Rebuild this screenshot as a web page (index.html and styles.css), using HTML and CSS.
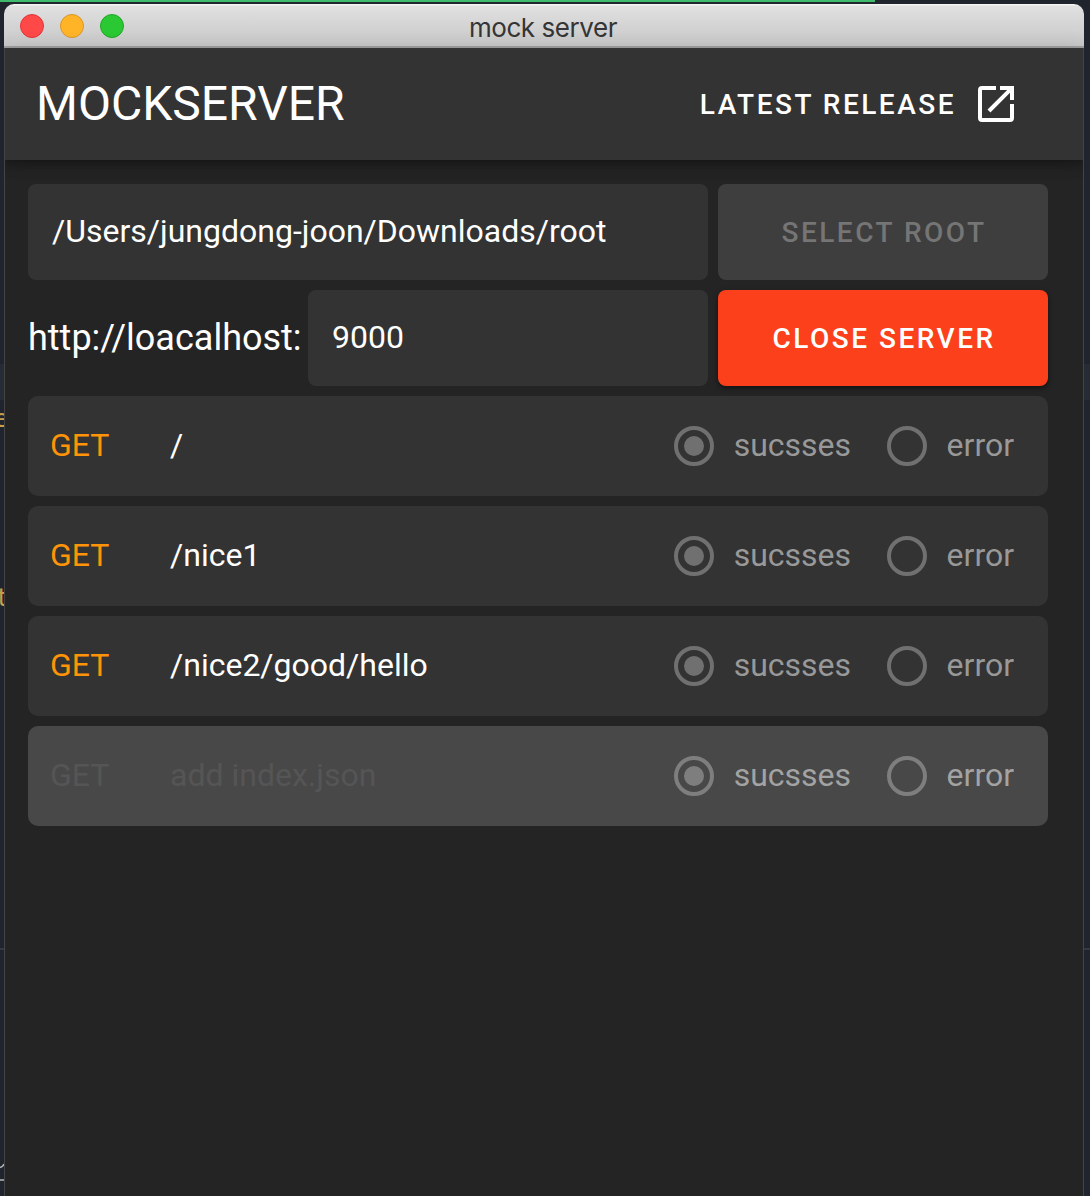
FILE: index.html
```html
<!DOCTYPE html>
<html lang="en">
<head>
<meta charset="utf-8">
<title>mock server</title>
<link rel="stylesheet" href="styles.css">
</head>
<body>
<div class="desktop">
  <div class="progress"></div>
  <div class="band"></div>
  <div class="rule"></div>
  <span class="code code-e">e</span>
  <span class="code code-t">t</span>
  <svg class="scribble" width="4" height="20" viewBox="0 0 4 20"><path d="M0 4.5Q3 4 4 1M0 17h4" fill="none" stroke="#b5b7ba" stroke-width="1.6"/></svg>
  <main class="window">
    <header class="titlebar">
      <div class="lights"><i class="light red"></i><i class="light yellow"></i><i class="light green"></i></div>
      <span class="window-title">mock server</span>
    </header>
    <nav class="appbar">
      <h1 class="brand">MOCKSERVER</h1>
      <a class="release"><span>LATEST RELEASE</span>
        <svg class="open-icon" width="36" height="36" viewBox="0 0 36 36"><path fill="#fff" d="M32 32H4V4H18V0H4Q0 0 0 4V32Q0 36 4 36H32Q36 36 36 32V18H32ZM22 0V4H29.2L9.5 23.6L12.4 26.5L32 6.8V14H36V0Z"/></svg>
      </a>
    </nav>
    <section class="content">
      <div class="form-row">
        <div class="field root">/Users/jungdong-joon/Downloads/root</div>
        <button class="button" disabled>SELECT ROOT</button>
      </div>
      <div class="form-row">
        <span class="host">http://loacalhost:</span>
        <div class="field port">9000</div>
        <button class="button close">CLOSE SERVER</button>
      </div>
      <div class="route"><span class="method">GET</span><span class="path">/</span><span class="option"><i class="radio checked"></i><span>sucsses</span></span><span class="option"><i class="radio"></i><span>error</span></span></div>
      <div class="route"><span class="method">GET</span><span class="path">/nice1</span><span class="option"><i class="radio checked"></i><span>sucsses</span></span><span class="option"><i class="radio"></i><span>error</span></span></div>
      <div class="route"><span class="method">GET</span><span class="path">/nice2/good/hello</span><span class="option"><i class="radio checked"></i><span>sucsses</span></span><span class="option"><i class="radio"></i><span>error</span></span></div>
      <div class="route empty"><span class="method">GET</span><span class="path">add index.json</span><span class="option"><i class="radio checked"></i><span>sucsses</span></span><span class="option"><i class="radio"></i><span>error</span></span></div>
    </section>
  </main>
</div>
</body>
</html>
```
FILE: styles.css
```css
* { box-sizing: border-box; }
body { margin: 0; font-family: Roboto, sans-serif; color: #fff; }
.desktop { position: relative; height: 1196px; padding: 4px 6px 0 4px; overflow: hidden; background: #20242d; }
.progress { position: absolute; top: 0; left: 0; width: 875px; height: 2px; background: #3dba6b; }
.band { position: absolute; top: 364px; left: 0; right: 0; height: 36px; background: #252c36; }
.rule { position: absolute; top: 948px; left: 0; right: 0; height: 2px; background: #343942; }
.code { position: absolute; font: 24px/28px "DejaVu Sans Mono", monospace; color: #c9a048; }
.code-e { left: -6px; top: 405px; }
.code-t { left: -5px; top: 584px; }
.scribble { position: absolute; left: 0; top: 1163px; }
.window { position: relative; display: flex; flex-direction: column; width: 1080px; height: 1192px; border-radius: 10px 10px 0 0; background: #242424; overflow: hidden; }
.window::after { content: ""; position: absolute; inset: 44px 0 0; border: solid #444; border-width: 0 1px; z-index: 3; }
.titlebar { display: grid; grid-template-columns: 1fr auto 1fr; align-items: center; height: 44px; flex: none; padding: 0 16px; background: linear-gradient(#f3f3f3 0 1px, #e0e0e0 2px, #c8c8c8 42px, #a0a0a0 42px); }
.lights { display: flex; gap: 16px; }
.light { width: 24px; height: 24px; border-radius: 50%; border: 1px solid; }
.red { background: #ff4949; border-color: #e23438; }
.yellow { background: #ffb428; border-color: #d9952a; }
.green { background: #2ac833; border-color: #20a728; }
.window-title { font: 26px/32px Inter, sans-serif; letter-spacing: -.45px; color: #353535; padding-top: 3px; margin-left: -2px; }
.appbar { position: relative; display: flex; align-items: center; justify-content: space-between; height: 112px; flex: none; padding: 0 70px 0 32px; background: #333; box-shadow: 0 4px 8px -2px rgba(0,0,0,.2), 0 8px 10px rgba(0,0,0,.14), 0 2px 20px rgba(0,0,0,.12); z-index: 1; }
.brand { margin: 0; font-size: 48px; font-weight: 400; line-height: 64px; }
.release { display: flex; align-items: center; gap: 22px; font-size: 28px; font-weight: 500; letter-spacing: 2.5px; }
.open-icon { flex: none; }
.content { display: flex; flex-direction: column; gap: 10px; padding: 24px 36px 0 24px; }
.form-row { display: flex; gap: 10px; height: 96px; align-items: center; }
.field { height: 96px; padding: 0 24px 2px; border-radius: 8px; background: #333; font-size: 32px; line-height: 94px; }
.root { width: 680px; }
.host { width: 270px; font-size: 36px; white-space: nowrap; }
.port { width: 400px; }
.button { width: 330px; height: 96px; padding: 0 0 0 2px; border: 0; border-radius: 8px; background: #3e3e3e; color: #757575; font: 500 28px Roboto, sans-serif; letter-spacing: 2.5px; }
.close { background: #fd401c; color: #fff; box-shadow: 0 2px 5px rgba(0,0,0,.5); }
.route { display: flex; align-items: center; height: 100px; padding: 0 34px 0 22px; border-radius: 10px; background: #333; font-size: 32px; }
.route span:not(.option) { padding-bottom: 2px; }
.method { width: 120px; color: #ff9408; }
.path { flex: 1; }
.option { display: flex; align-items: center; gap: 20px; margin-left: 35.5px; color: #999; }
.radio { display: grid; place-items: center; width: 40px; height: 40px; border: 4px solid #707070; border-radius: 50%; }
.checked::after { content: ""; width: 20px; height: 20px; border-radius: 50%; background: #707070; }
.empty { background: #484848; }
.empty .method, .empty .path { color: #555; }
.empty .option { color: #a3a3a3; }
.empty .radio { border-color: #7e7e7e; }
.empty .checked::after { background: #7e7e7e; }
```
